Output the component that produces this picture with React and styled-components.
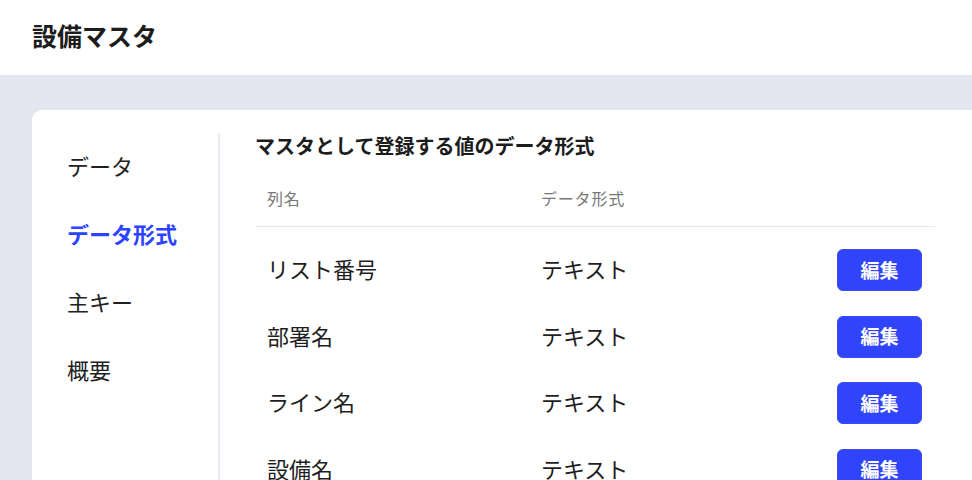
import React, { useState } from 'react';
import styled, { createGlobalStyle } from 'styled-components';

const GlobalStyle = createGlobalStyle`
  html, body {
    margin: 0;
    padding: 0;
    overflow: hidden;
    background: #e4e7f0;
    font-family: "Noto Sans CJK JP", "Noto Sans", sans-serif;
    color: #222;
  }
`;

const Header = styled.header`
  height: 75px;
  background: #fff;
  display: flex;
  align-items: center;
  padding-left: 32px;
  padding-bottom: 5px;
  box-sizing: border-box;
`;

const Title = styled.h1`
  margin: 0;
  font-size: 25px;
  font-weight: 700;
  color: #1c1c1c;
`;

const Main = styled.main`
  padding: 35px 0 0 32px;
  height: 405px;
  box-sizing: border-box;
`;

const Card = styled.div`
  width: 1000px;
  height: 100%;
  background: #fff;
  border-radius: 10px 0 0 0;
  display: flex;
`;

const Sidebar = styled.nav`
  width: 188px;
  flex-shrink: 0;
  margin-top: 23px;
  padding-left: 35px;
  box-sizing: border-box;
  border-right: 2px solid #e9eaf2;
  display: flex;
  flex-direction: column;
`;

const NavItem = styled.div`
  height: 68px;
  padding-bottom: 4px;
  box-sizing: border-box;
  display: flex;
  align-items: center;
  font-size: 22px;
  font-weight: ${p => (p.$active ? 700 : 400)};
  color: ${p => (p.$active ? '#2c44ff' : '#222')};
  cursor: pointer;
`;

const Content = styled.section`
  width: 715px;
  padding: 21px 0 0 35px;
  box-sizing: border-box;
`;

const Heading = styled.h2`
  margin: 0;
  font-size: 20px;
  line-height: 30px;
  font-weight: 700;
  color: #1c1c1c;
`;

const Row = styled.div`
  display: grid;
  grid-template-columns: 274px 1fr auto;
  align-items: center;
  padding: 0 13px 0 12px;
`;

const HeadRow = styled(Row)`
  margin-top: 15px;
  height: 50px;
  border-bottom: 1px solid #e6e7ef;
  font-size: 16px;
  color: #777;
  letter-spacing: 0.8px;
`;

const Body = styled.div`
  padding-top: 10px;
`;

const DataRow = styled(Row)`
  height: 66.5px;
  font-size: 22px;
  color: #1e1e1e;
`;

const Cell = styled.span`
  padding-bottom: ${p => (p.$head ? 6 : 4)}px;
`;

const EditButton = styled.button`
  width: 85px;
  height: 42px;
  padding: 0 0 2px;
  border: 1px solid #3a4cf0;
  border-radius: 6px;
  background: #3044fc;
  color: #fff;
  font-family: inherit;
  font-size: 19px;
  font-weight: 700;
  cursor: pointer;
`;

const navItems = ['データ', 'データ形式', '主キー', '概要'];

const columns = [
  { name: 'リスト番号', type: 'テキスト' },
  { name: '部署名', type: 'テキスト' },
  { name: 'ライン名', type: 'テキスト' },
  { name: '設備名', type: 'テキスト' },
];

export default function App() {
  const [active, setActive] = useState('データ形式');

  return (
    <>
      <GlobalStyle />
      <Header>
        <Title>設備マスタ</Title>
      </Header>
      <Main>
        <Card>
          <Sidebar>
            {navItems.map(item => (
              <NavItem key={item} $active={item === active} onClick={() => setActive(item)}>
                {item}
              </NavItem>
            ))}
          </Sidebar>
          <Content>
            <Heading>マスタとして登録する値のデータ形式</Heading>
            <HeadRow>
              <Cell $head>列名</Cell>
              <Cell $head>データ形式</Cell>
              <span />
            </HeadRow>
            <Body>
              {columns.map(col => (
                <DataRow key={col.name}>
                  <Cell>{col.name}</Cell>
                  <Cell>{col.type}</Cell>
                  <EditButton>編集</EditButton>
                </DataRow>
              ))}
            </Body>
          </Content>
        </Card>
      </Main>
    </>
  );
}
